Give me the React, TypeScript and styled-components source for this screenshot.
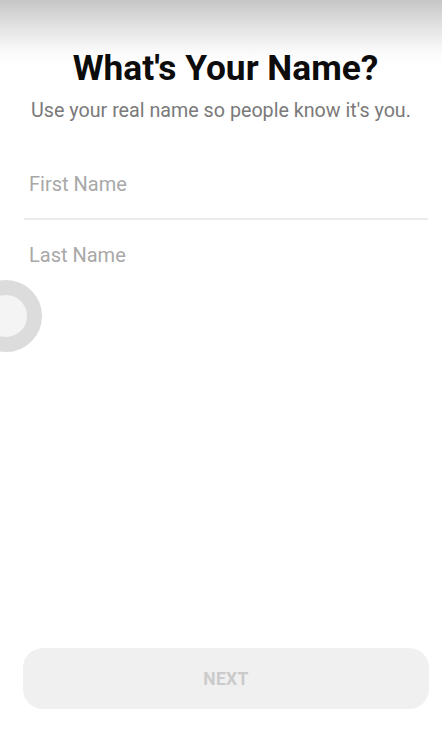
import React, { useState } from 'react';
import styled, { createGlobalStyle } from 'styled-components';

const GlobalStyle = createGlobalStyle`
    html, body {
        margin: 0;
        padding: 0;
        background: #ffffff;
    }
    body {
        font-family: Roboto, "Noto Sans", Arial, sans-serif;
    }
    * {
        box-sizing: border-box;
    }
`;

const Screen = styled.div`
    position: relative;
    width: 442px;
    height: 732px;
    display: flex;
    flex-direction: column;
    overflow: hidden;
    background: linear-gradient(to bottom, #c6c6c6 0px, #e4e4e4 28px, #fafafa 52px, #ffffff 64px);
`;

const Header = styled.div`
    display: flex;
    flex-direction: column;
    align-items: center;
    padding-top: 48px;
`;

const Title = styled.h1`
    margin: 0 0 0 9px;
    font-size: 35.3px;
    line-height: 40px;
    font-weight: 700;
    color: #0c0c0c;
`;

const Subtitle = styled.p`
    margin: 11px 0 0;
    font-size: 19.7px;
    line-height: 24px;
    color: #7a7a7a;
`;

const Form = styled.div`
    display: flex;
    flex-direction: column;
    gap: 17px;
    padding: 0 14px 0 24px;
    margin-top: 43px;
`;

const FieldRow = styled.label<{ underline?: boolean }>`
    display: flex;
    padding-bottom: ${p => (p.underline ? '16px' : '0')};
    border-bottom: ${p => (p.underline ? '2px solid #ebebeb' : 'none')};
`;

const Field = styled.input`
    flex: 1;
    border: none;
    outline: none;
    background: transparent;
    height: 36px;
    padding: 0 0 0 5px;
    font-family: Roboto, "Noto Sans", Arial, sans-serif;
    font-size: 20px;
    color: #333;

    &::placeholder {
        color: #a8a8a8;
    }
`;

const Spacer = styled.div`
    flex: 1;
`;

const Footer = styled.div`
    padding: 0 13px 23px 23px;
`;

const NextButton = styled.button<{ active: boolean }>`
    width: 100%;
    height: 61px;
    border: none;
    border-radius: 20px;
    background: ${p => (p.active ? '#1a73e8' : '#f0f0f0')};
    color: ${p => (p.active ? '#ffffff' : '#cbcbcb')};
    font-family: Roboto, "Noto Sans", Arial, sans-serif;
    font-size: 17.5px;
    font-weight: 700;
    letter-spacing: 0.3px;
`;

const Spinner = styled.div`
    position: absolute;
    left: -30px;
    top: 280px;
    width: 72px;
    height: 72px;
    border-radius: 50%;
    border: 15px solid #dcdcdc;
    background: #f4f4f4;
`;

export default function App() {
    const [first, setFirst] = useState('');
    const [last, setLast] = useState('');
    const active = first.trim().length > 0 && last.trim().length > 0;

    return (
        <>
            <GlobalStyle />
            <Screen>
                <Header>
                    <Title>What's Your Name?</Title>
                    <Subtitle>Use your real name so people know it's you.</Subtitle>
                </Header>
                <Form>
                    <FieldRow underline>
                        <Field
                            placeholder="First Name"
                            value={first}
                            onChange={e => setFirst(e.target.value)}
                        />
                    </FieldRow>
                    <FieldRow>
                        <Field
                            placeholder="Last Name"
                            value={last}
                            onChange={e => setLast(e.target.value)}
                        />
                    </FieldRow>
                </Form>
                <Spacer />
                <Footer>
                    <NextButton active={active}>NEXT</NextButton>
                </Footer>
                <Spinner />
            </Screen>
        </>
    );
}
